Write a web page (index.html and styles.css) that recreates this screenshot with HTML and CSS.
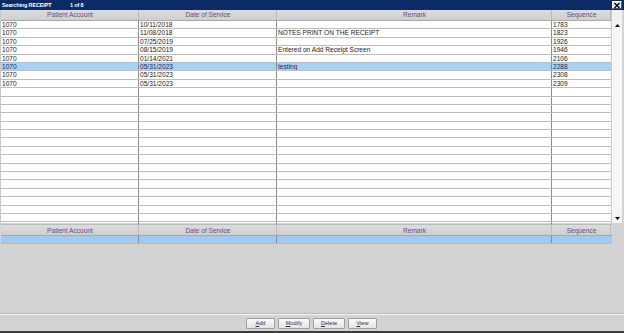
FILE: index.html
```html
<!DOCTYPE html>
<html>
<head>
<meta charset="utf-8">
<link rel="stylesheet" href="styles.css">
</head>
<body>
<div class="window">
  <div class="titlebar">
    <span class="title">Searching RECEIPT</span>
    <span class="count">1 of 8</span>
    <span class="close">
      <svg width="8" height="7" viewBox="0 0 8 7"><path d="M1.5 1 L6.5 6 M6.5 1 L1.5 6" stroke="#000" stroke-width="1.3"/></svg>
    </span>
  </div>
  <div class="top">
    <div class="table">
      <div class="row head">
        <div class="c">Patient Account</div><div class="c">Date of Service</div><div class="c">Remark</div><div class="c">Sequence</div>
      </div>
      <div class="row"><div class="c">1070</div><div class="c">10/11/2018</div><div class="c"></div><div class="c">1783</div></div>
      <div class="row"><div class="c">1070</div><div class="c">11/08/2018</div><div class="c">NOTES PRINT ON THE RECEIPT</div><div class="c">1823</div></div>
      <div class="row"><div class="c">1070</div><div class="c">07/25/2019</div><div class="c"></div><div class="c">1926</div></div>
      <div class="row"><div class="c">1070</div><div class="c">08/15/2019</div><div class="c">Entered on Add Receipt Screen</div><div class="c">1946</div></div>
      <div class="row"><div class="c">1070</div><div class="c">01/14/2021</div><div class="c"></div><div class="c">2106</div></div>
      <div class="row sel"><div class="c">1070</div><div class="c">05/31/2023</div><div class="c">testing</div><div class="c">2288</div></div>
      <div class="row"><div class="c">1070</div><div class="c">05/31/2023</div><div class="c"></div><div class="c">2308</div></div>
      <div class="row"><div class="c">1070</div><div class="c">05/31/2023</div><div class="c"></div><div class="c">2309</div></div>
      <div class="row"><div class="c"></div><div class="c"></div><div class="c"></div><div class="c"></div></div>
      <div class="row"><div class="c"></div><div class="c"></div><div class="c"></div><div class="c"></div></div>
      <div class="row"><div class="c"></div><div class="c"></div><div class="c"></div><div class="c"></div></div>
      <div class="row"><div class="c"></div><div class="c"></div><div class="c"></div><div class="c"></div></div>
      <div class="row"><div class="c"></div><div class="c"></div><div class="c"></div><div class="c"></div></div>
      <div class="row"><div class="c"></div><div class="c"></div><div class="c"></div><div class="c"></div></div>
      <div class="row"><div class="c"></div><div class="c"></div><div class="c"></div><div class="c"></div></div>
      <div class="row"><div class="c"></div><div class="c"></div><div class="c"></div><div class="c"></div></div>
      <div class="row"><div class="c"></div><div class="c"></div><div class="c"></div><div class="c"></div></div>
      <div class="row"><div class="c"></div><div class="c"></div><div class="c"></div><div class="c"></div></div>
      <div class="row"><div class="c"></div><div class="c"></div><div class="c"></div><div class="c"></div></div>
      <div class="row"><div class="c"></div><div class="c"></div><div class="c"></div><div class="c"></div></div>
      <div class="row"><div class="c"></div><div class="c"></div><div class="c"></div><div class="c"></div></div>
      <div class="row"><div class="c"></div><div class="c"></div><div class="c"></div><div class="c"></div></div>
      <div class="row"><div class="c"></div><div class="c"></div><div class="c"></div><div class="c"></div></div>
      <div class="row"><div class="c"></div><div class="c"></div><div class="c"></div><div class="c"></div></div>
      <div class="row last"><div class="c"></div><div class="c"></div><div class="c"></div><div class="c"></div></div>
    </div>
    <div class="scroll">
      <div class="arrow"><svg width="5" height="3" viewBox="0 0 5 3"><path d="M0 3 L2.5 0 L5 3 Z" fill="#000"/></svg></div>
      <div class="track"></div>
      <div class="arrow"><svg width="5" height="3" viewBox="0 0 5 3"><path d="M0 0 L2.5 3 L5 0 Z" fill="#000"/></svg></div>
    </div>
  </div>
  <div class="bottom">
    <div class="table2">
      <div class="row head">
        <div class="c">Patient Account</div><div class="c">Date of Service</div><div class="c">Remark</div><div class="c">Sequence</div>
      </div>
      <div class="row blue"><div class="c"></div><div class="c"></div><div class="c"></div><div class="c"></div></div>
    </div>
    <div class="space"></div>
    <div class="buttons">
      <button class="btn"><u>A</u>dd</button>
      <button class="btn"><u>M</u>odify</button>
      <button class="btn"><u>D</u>elete</button>
      <button class="btn"><u>V</u>iew</button>
    </div>
  </div>
</div>
</body>
</html>
```

FILE: styles.css
```css
* { box-sizing: border-box; }
html, body { margin: 0; padding: 0; }
body {
  width: 624px;
  height: 333px;
  overflow: hidden;
  font-family: "Liberation Sans", Arial, sans-serif;
  background: #d3d3d3;
}
.window {
  width: 624px;
  height: 333px;
  display: flex;
  flex-direction: column;
  background: #d3d3d3;
  border-bottom: 2px solid #3c3c3c;
}
.titlebar {
  height: 10px;
  background: #0c2a66;
  color: #fff;
  display: flex;
  align-items: center;
  font-size: 5.5px;
  font-weight: bold;
  letter-spacing: -0.15px;
  padding-left: 2px;
}
.title { width: 68px; }
.close {
  margin-left: auto;
  margin-right: 2px;
  width: 10px;
  height: 8px;
  background: #e8e8e8;
  border: 1px solid #fff;
  border-right-color: #555;
  border-bottom-color: #555;
  display: flex;
  align-items: center;
  justify-content: center;
}
.top {
  display: flex;
  height: 213px;
  padding-right: 2px;
}
.table {
  width: 611px;
  background: #fff;
  border-left: 1px solid #c8c8c8;
}
.row {
  display: grid;
  grid-template-columns: 138px 138px 275px 59px;
  height: 8.4px;
  border-bottom: 1px solid #bdbdbd;
  font-size: 6.6px;
  line-height: 7.4px;
  color: #222;
}
.row .c {
  border-right: 1px solid #8c8c8c;
  padding-left: 1px;
  white-space: nowrap;
  overflow: hidden;
}
.row .c:last-child { border-right: none; }
.row.head {
  height: 11px;
  background: linear-gradient(#dcdcdc, #cfcfcf);
  color: #6a4a8c;
  border-bottom: 1px solid #a8a8a8;
  line-height: 10px;
  font-size: 6.6px;
}
.row.head .c {
  text-align: center;
  border-right: 1px solid #bcbcbc;
}
.row.sel { background: #a9d0f5; color: #1a2a60; }
.row.last { border-bottom: none; }
.scroll {
  width: 11px;
  display: flex;
  flex-direction: column;
  background: #f0f0f0;
  border-left: 1px solid #c8c8c8;
  padding-top: 11px;
}
.arrow {
  height: 9px;
  display: flex;
  align-items: center;
  justify-content: center;
  background: #f4f4f4;
}
.track { flex: 1; background: #f6f6f6; border-left: 1px solid #fff; }
.bottom {
  flex: 1;
  display: flex;
  flex-direction: column;
  padding-top: 1px;
}
.table2 { width: 612px; padding-left: 1px; }
.table2 .row.head { height: 12px; line-height: 11px; border-top: 1px solid #bcbcbc; }
.row.blue { background: #9fcbf2; height: 8px; border-bottom: 1px solid #b8b8b8; }
.space {
  flex: 1;
  border-bottom: 1px solid #bcbcbc;
  box-shadow: 0 1px 0 #f4f4f4;
}
.buttons {
  height: 17px;
  display: flex;
  align-items: center;
  padding-left: 246px;
  gap: 3px;
  padding-top: 2px;
}
.btn {
  height: 11px;
  width: 29px;
  padding: 0;
  margin: 0;
  font-family: "Liberation Sans", Arial, sans-serif;
  font-size: 5.6px;
  color: #2a2a55;
  background: linear-gradient(#fafafa, #e4e4e4);
  border: 1px solid #a0a0a0;
  border-radius: 1px;
  line-height: 9px;
}
.btn:nth-child(2) { width: 32px; }
.btn:nth-child(3) { width: 32px; }
.btn:nth-child(4) { width: 29px; }
```
